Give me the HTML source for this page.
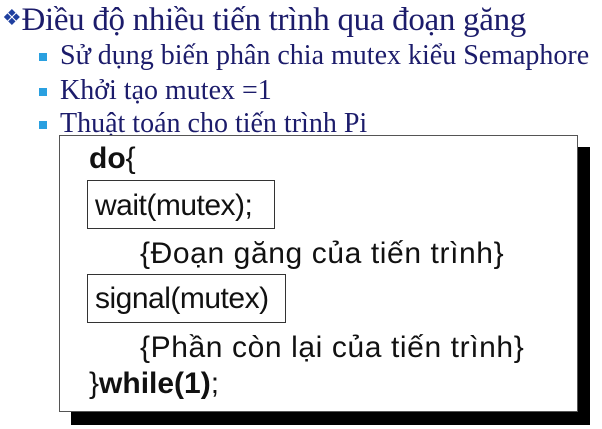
<!DOCTYPE html>
<html><head><meta charset="utf-8"><style>
body{margin:0;width:602px;height:429px;background:#fff;position:relative;overflow:hidden;font-family:"Liberation Serif",serif;}
.t{position:absolute;white-space:nowrap;color:#1c1c6b;line-height:1.15;}
.b{position:absolute;width:8px;height:8px;background:#2aa0e0;}
.c{position:absolute;white-space:nowrap;font-family:"Liberation Sans","DejaVu Sans",sans-serif;font-size:30px;line-height:35px;color:#111;letter-spacing:0.6px;}
</style></head><body>
<div class="t" style="left:2px;top:2px;font-size:33px;letter-spacing:-0.3px"><span style="color:#1f3f9f;font-size:22px;position:relative;top:-5px">❖</span>Điều độ nhiều tiến trình qua đoạn găng</div>
<div class="b" style="left:39px;top:53px"></div>
<div class="t" style="left:60px;top:40px;font-size:28px">Sử dụng biến phân chia mutex kiểu Semaphore</div>
<div class="b" style="left:39px;top:88px"></div>
<div class="t" style="left:60px;top:75px;font-size:28px">Khởi tạo mutex =1</div>
<div class="b" style="left:39px;top:121px"></div>
<div class="t" style="left:60px;top:108px;font-size:28px">Thuật toán cho tiến trình Pi</div>
<div style="position:absolute;left:71px;top:147px;width:519px;height:278px;background:#000"></div>
<div style="position:absolute;left:59px;top:135px;width:517px;height:275px;background:#fff;border:1px solid #555"></div>
<div style="position:absolute;left:87px;top:180px;width:186px;height:47px;border:1.5px solid #333"></div>
<div style="position:absolute;left:87px;top:274px;width:197px;height:47px;border:1.5px solid #333"></div>
<div class="c" style="left:89px;top:141px;letter-spacing:0"><b>do</b>{</div>
<div class="c" style="left:95px;top:188px;letter-spacing:-0.5px">wait(mutex);</div>
<div class="c" style="left:140px;top:236px">{Đoạn găng của tiến trình}</div>
<div class="c" style="left:95px;top:281px;letter-spacing:-0.5px">signal(mutex)</div>
<div class="c" style="left:140px;top:330px">{Phần còn lại của tiến trình}</div>
<div class="c" style="left:89px;top:366px;letter-spacing:0">}<b>while(1)</b>;</div>
</body></html>
